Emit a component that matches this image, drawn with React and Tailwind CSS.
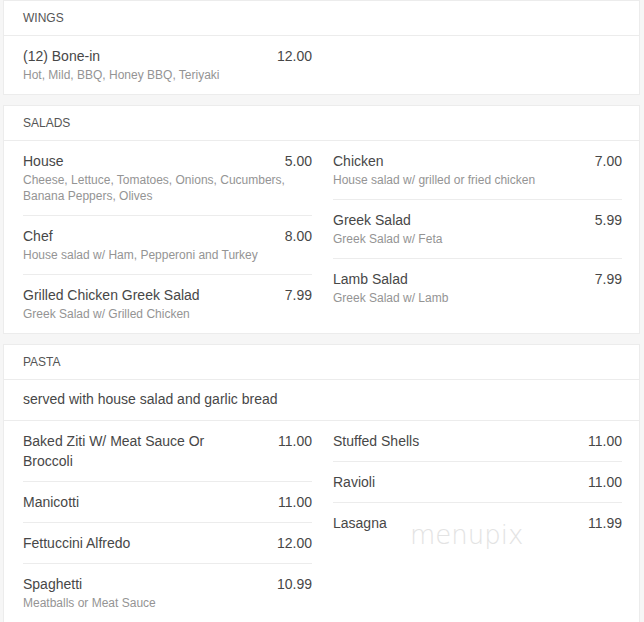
import React from "react";

const wings = [[{ name: "(12) Bone-in", price: "12.00", desc: "Hot, Mild, BBQ, Honey BBQ, Teriyaki" }], []];

const salads = [
  [
    { name: "House", price: "5.00", desc: "Cheese, Lettuce, Tomatoes, Onions, Cucumbers, Banana Peppers, Olives" },
    { name: "Chef", price: "8.00", desc: "House salad w/ Ham, Pepperoni and Turkey" },
    { name: "Grilled Chicken Greek Salad", price: "7.99", desc: "Greek Salad w/ Grilled Chicken" },
  ],
  [
    { name: "Chicken", price: "7.00", desc: "House salad w/ grilled or fried chicken" },
    { name: "Greek Salad", price: "5.99", desc: "Greek Salad w/ Feta" },
    { name: "Lamb Salad", price: "7.99", desc: "Greek Salad w/ Lamb" },
  ],
];

const pasta = [
  [
    { name: "Baked Ziti W/ Meat Sauce Or Broccoli", price: "11.00" },
    { name: "Manicotti", price: "11.00" },
    { name: "Fettuccini Alfredo", price: "12.00" },
    { name: "Spaghetti", price: "10.99", desc: "Meatballs or Meat Sauce" },
  ],
  [
    { name: "Stuffed Shells", price: "11.00" },
    { name: "Ravioli", price: "11.00" },
    { name: "Lasagna", price: "11.99" },
  ],
];

function Item({ item }) {
  return (
    <div
      className={
        item.desc
          ? "pt-[10px] pb-[11px] border-b border-[#ececec] last:border-b-0"
          : "pt-[10px] pb-[10px] border-b border-[#ececec] last:border-b-0"
      }
    >
      <div className="flex justify-between items-start">
        <div className="w-2/3 text-[14px] leading-[20px] text-[#474747]">{item.name}</div>
        <div className="text-[14px] leading-[20px] text-[#474747]">{item.price}</div>
      </div>
      {item.desc && (
        <div className="mt-[1px] text-[12px] leading-[16px] text-[#949494]">{item.desc}</div>
      )}
    </div>
  );
}

function Section({ title, note, cols }) {
  return (
    <div className="ml-[3px] w-[637px] bg-white border border-[#ececec]">
      <div className="h-[35px] flex items-center px-[19px] border-b border-[#ececec] text-[12px] text-[#555] uppercase">
        {title}
      </div>
      {note && (
        <div className="px-[19px] pt-[9px] pb-[11px] border-b border-[#ececec] text-[14px] leading-[20px] text-[#474747]">
          {note}
        </div>
      )}
      <div className="grid grid-cols-2 gap-x-[21px] pl-[19px] pr-[17px]">
        {cols.map((col, i) => (
          <div key={i} className="flex flex-col">
            {col.map((it, j) => (
              <Item key={j} item={it} />
            ))}
          </div>
        ))}
      </div>
    </div>
  );
}

export default function App() {
  return (
    <div
      className="relative w-[644px] h-[622px] overflow-hidden bg-[#f6f6f6] flex flex-col gap-[10px]"
      style={{ fontFamily: '"Liberation Sans", Arial, sans-serif' }}
    >
      <Section title="Wings" cols={wings} />
      <Section title="Salads" cols={salads} />
      <Section title="Pasta" note="served with house salad and garlic bread" cols={pasta} />
      <div
        className="absolute left-[410px] top-[520px] text-[26px] leading-[30px] text-[#e3e3e3] pointer-events-none"
        style={{ fontFamily: '"DejaVu Sans", sans-serif', fontWeight: 200 }}
      >
        menupix
      </div>
    </div>
  );
}
